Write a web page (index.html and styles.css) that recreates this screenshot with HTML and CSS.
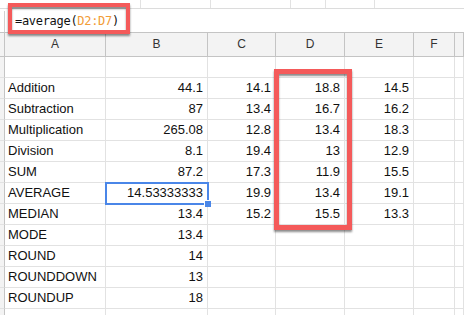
FILE: index.html
```html
<!DOCTYPE html>
<html>
<head>
    <title>Average formula</title>
    <meta charset="utf-8">
    <link rel="stylesheet" href="styles.css">
</head>
<body>
    <div class="page">
        <div class="toolbar">
            <div class="tool w1"></div>
            <div class="tool w2"></div>
            <div class="tool w3"></div>
            <div class="tool w4"></div>
            <div class="tool w5"></div>
            <div class="tool rest"></div>
        </div>

        <div class="formula-bar">
            <div class="fx"></div>
            <div class="formula">=average(<span class="range">D2:D7</span>)</div>
        </div>

        <div class="sheet">
            <div class="head gutter"></div>
            <div class="head">A</div>
            <div class="head">B</div>
            <div class="head">C</div>
            <div class="head">D</div>
            <div class="head">E</div>
            <div class="head">F</div>
            <div class="head"></div>

            <div class="gutter"></div><div class="cell"></div><div class="cell"></div><div class="cell"></div><div class="cell"></div><div class="cell"></div><div class="cell"></div><div class="cell"></div>

            <div class="gutter"></div><div class="cell">Addition</div><div class="cell num">44.1</div><div class="cell num">14.1</div><div class="cell num">18.8</div><div class="cell num">14.5</div><div class="cell"></div><div class="cell"></div>

            <div class="gutter"></div><div class="cell">Subtraction</div><div class="cell num">87</div><div class="cell num">13.4</div><div class="cell num">16.7</div><div class="cell num">16.2</div><div class="cell"></div><div class="cell"></div>

            <div class="gutter"></div><div class="cell">Multiplication</div><div class="cell num">265.08</div><div class="cell num">12.8</div><div class="cell num">13.4</div><div class="cell num">18.3</div><div class="cell"></div><div class="cell"></div>

            <div class="gutter"></div><div class="cell">Division</div><div class="cell num">8.1</div><div class="cell num">19.4</div><div class="cell num">13</div><div class="cell num">12.9</div><div class="cell"></div><div class="cell"></div>

            <div class="gutter"></div><div class="cell">SUM</div><div class="cell num">87.2</div><div class="cell num">17.3</div><div class="cell num">11.9</div><div class="cell num">15.5</div><div class="cell"></div><div class="cell"></div>

            <div class="gutter"></div><div class="cell">AVERAGE</div><div class="cell num selected">14.53333333</div><div class="cell num">19.9</div><div class="cell num">13.4</div><div class="cell num">19.1</div><div class="cell"></div><div class="cell"></div>

            <div class="gutter"></div><div class="cell">MEDIAN</div><div class="cell num">13.4</div><div class="cell num">15.2</div><div class="cell num">15.5</div><div class="cell num">13.3</div><div class="cell"></div><div class="cell"></div>

            <div class="gutter"></div><div class="cell">MODE</div><div class="cell num">13.4</div><div class="cell"></div><div class="cell"></div><div class="cell"></div><div class="cell"></div><div class="cell"></div>

            <div class="gutter"></div><div class="cell">ROUND</div><div class="cell num">14</div><div class="cell"></div><div class="cell"></div><div class="cell"></div><div class="cell"></div><div class="cell"></div>

            <div class="gutter"></div><div class="cell">ROUNDDOWN</div><div class="cell num">13</div><div class="cell"></div><div class="cell"></div><div class="cell"></div><div class="cell"></div><div class="cell"></div>

            <div class="gutter"></div><div class="cell">ROUNDUP</div><div class="cell num">18</div><div class="cell"></div><div class="cell"></div><div class="cell"></div><div class="cell"></div><div class="cell"></div>

            <div class="gutter"></div><div class="cell"></div><div class="cell"></div><div class="cell"></div><div class="cell"></div><div class="cell"></div><div class="cell"></div><div class="cell"></div>
        </div>

        <!-- annotation boxes drawn over the sheet -->
        <div class="mark mark-formula"></div>
        <div class="mark mark-range"></div>
    </div>
</body>
</html>
```

FILE: styles.css
```css
body {
    margin: 0;
    background: white;
    font-family: "Liberation Sans", Arial, sans-serif;
    color: #000;
    overflow: hidden;
}

.page {
    position: relative;
    width: 464px;
    height: 315px;
    overflow: hidden;
}

/* cropped toolbar strip at the top */
.toolbar {
    display: flex;
    height: 8px;
    border-bottom: 1px solid #dcdcdc;
}

.tool {
    border-right: 1px solid #e2e2e2;
}

.w1 { width: 140px; }
.w2 { width: 69px; }
.w3 { width: 79px; }
.w4 { width: 34px; }
.w5 { width: 48px; }
.tool.rest { flex: 1; border-right: none; }

/* formula bar */
.formula-bar {
    display: flex;
    height: 23px;
}

.fx {
    width: 4px;
    margin-top: 2px;
    border-right: 1px solid #d0d0d0;
}

.formula {
    padding-left: 10px;
    font-family: "DejaVu Sans Mono", "Liberation Mono", monospace;
    font-size: 12px;
    letter-spacing: -0.3px;
    line-height: 25px;
    color: #111;
}

.range {
    color: #f29c38;
}

/* grid */
.sheet {
    display: grid;
    grid-template-columns: 5px 101px 102px 68px 69px 69px 41px 9px;
    grid-auto-rows: 21px;
    grid-template-rows: 25px;
}

.head {
    background: #f3f3f3;
    border-top: 1px solid #c4c4c4;
    border-bottom: 1px solid #c4c4c4;
    border-right: 1px solid #c4c4c4;
    font-size: 12px;
    line-height: 23px;
    text-align: center;
    color: #333;
}

.gutter {
    background: #f3f3f3;
    border-right: 1px solid #c4c4c4;
    border-bottom: 1px solid #e2e2e2;
}

.head.gutter {
    border-bottom: 1px solid #c4c4c4;
}

.cell {
    position: relative;
    border-right: 1px solid #e2e2e2;
    border-bottom: 1px solid #e2e2e2;
    padding: 0 4px 0 3px;
    font-size: 13px;
    line-height: 20px;
    white-space: nowrap;
    color: #111;
}

.cell.num {
    text-align: right;
}

.cell.selected {
    z-index: 1;
    outline: 2px solid #4a86e8;
    outline-offset: -1px;
}

.cell.selected:after {
    content: "";
    position: absolute;
    right: -4px;
    bottom: -4px;
    width: 6px;
    height: 6px;
    background: #4a86e8;
    border: 1px solid white;
    border-right: none;
    border-bottom: none;
}

/* red annotation rectangles */
.mark {
    position: absolute;
    z-index: 2;
    box-sizing: border-box;
    border: 4px solid #f45a5a;
    box-shadow: 0 2px 2px rgba(0, 0, 0, 0.45), inset 0 2px 2px rgba(0, 0, 0, 0.45);
}

.mark-formula {
    left: 8px;
    top: 3px;
    width: 122px;
    height: 31px;
}

.mark-range {
    left: 274px;
    top: 69px;
    width: 78px;
    height: 161px;
    border-width: 5px;
}
```
